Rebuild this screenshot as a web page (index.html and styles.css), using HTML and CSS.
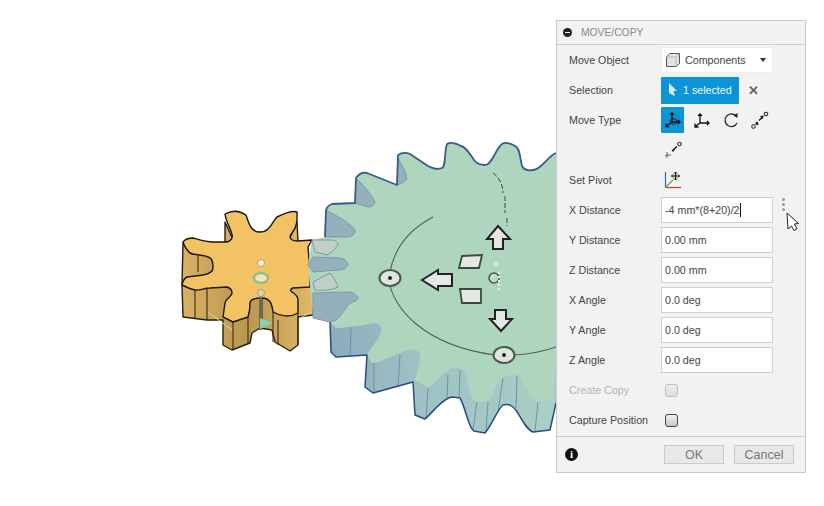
FILE: index.html
```html
<!DOCTYPE html>
<html lang="en">
<head>
    <meta charset="UTF-8">
    <title>Move/Copy</title>
    <link rel="stylesheet" href="styles.css">
</head>
<body>
    <svg class="canvas" width="824" height="506" viewBox="0 0 824 506">
        <defs>
            <linearGradient id="ochre" x1="0" y1="0" x2="1" y2="0">
                <stop offset="0" stop-color="#d8b062"/>
                <stop offset="0.5" stop-color="#b9974f"/>
                <stop offset="1" stop-color="#e0b865"/>
            </linearGradient>
            <linearGradient id="steel" x1="0" y1="0" x2="1" y2="0">
                <stop offset="0" stop-color="#8aa8bb"/>
                <stop offset="0.4" stop-color="#9cc0c4"/>
                <stop offset="1" stop-color="#a9d0c4"/>
            </linearGradient>
        </defs>

        <!-- small gear -->
        <path class="wall-small" d="M183 243 L182 285 L183 317 L207 320 L223 320 L223 345 L232 350 L250 343 L252 333 L260 328 L272 330 L275 342 L290 351 L298 345 L298 317 L313 315 L313 285 L260 285 L215 250 Z"/>
        <path class="wall-small" d="M225 222 L234 242 H225 Z M297 222 L288 242 H298 Z"/>
        <path class="edge" d="M207 289 V320 M195 290 V318 M233 322 V349 M248 317 V343 M273 312 V342 M278 320 V345 M298 313 V345 M198 256 V272 M262 298 V328"/>
        <path class="face-small" d="M225 214 C232 210 240 211 246 215 C249 224 251 232 260 232 C270 232 272 222 277 217 C283 214 292 210 297 212 C297 218 298 226 292 233 C288 238 291 241 298 241 L312 240 L308 247 L310 270 L310 287 L293 288 C290 289 290 291 292 292 C297 295 298 298 298 300 L298 313 C290 318 280 316 273 312 C272 304 270 298 262 298 C254 298 250 300 250 303 C250 310 249 314 248 317 L233 322 L223 317 L225 303 C226 298 232 297 232 293 C232 290 230 288 227 287 L210 288 C204 288 200 291 195 290 C190 289 186 287 182 285 C183 280 185 278 187 277 L203 275 C208 274 213 272 213 268 C213 262 212 259 210 258 C204 254 196 256 190 253 C187 250 184 246 183 242 C186 238 190 238 193 238 C200 240 206 242 213 242 L227 242 C231 241 233 238 232 235 C231 229 226 222 225 214 Z"/>
        <path class="axis" d="M208 312 L232 330 M300 318 L312 312"/>
        <rect class="shaft" x="259" y="296" width="3" height="34"/>
        <circle class="hole" cx="261" cy="263" r="3.5"/>
        <ellipse class="ring" cx="261" cy="278" rx="7" ry="5"/>
        <circle class="hole dim" cx="261" cy="293" r="3.5"/>
        <path class="cone" d="M260 318 L273 323 L260 329 Z"/>

        <!-- big gear -->
        <path class="wall-big" d="M313 293 L313 318 L330 322 L331 352 L336 357 L367 355 L365 387 L373 393 L413 382 L415 415 L425 419 C433 412 443 398 452 397 L460 398 C466 408 468 428 474 431 L485 433 C492 425 497 410 503 405 C510 403 513 407 516 410 C522 420 527 430 533 432 L550 430 L556 403 L556 300 Z"/>
        <path class="edge-blue" d="M351 328 L350 356 M374 363 L374 392 M400 355 L398 386 M428 388 L426 418 M448 375 L447 398 M460 370 L459 398 M477 402 L473 430 M488 402 L486 432 M503 378 L498 412 M517 375 L516 408 M538 402 L535 431"/>
        <path class="face-big" d="M556 153 C548 156 541 170 533 170 C527 171 524 170 522 166 C520 158 520 148 515 146 C510 143 505 142 502 144 C496 148 492 165 485 165 C480 165 477 164 474 160 C470 154 466 147 461 146 C456 143 450 142 447 144 C444 152 446 167 442 168 C436 170 432 168 428 166 L410 154 C405 152 401 153 398 155 L397 185 L367 173 C362 172 358 175 356 178 L355 203 L332 204 C329 205 327 207 326 210 L325 237 L312 240 L308 265 L313 318 L330 322 C334 328 337 328 340 328 L365 325 C372 323 380 322 381 328 C383 336 372 345 367 355 C370 362 372 363 376 363 L405 351 C412 348 418 350 420 353 C421 362 416 375 415 380 L428 388 C437 382 446 368 455 368 C465 367 467 372 468 385 C470 395 474 402 477 402 L488 402 C493 395 498 380 503 377 C510 374 517 374 520 378 C526 387 532 399 538 402 L552 400 C554 390 554 380 556 370 Z"/>
        <path class="lobe light" d="M312 240 L332 240 C336 240 338 243 338 245 C335 250 330 253 327 255 L315 252 Z"/>
        <path class="lobe" d="M308 265 L313 257 L340 258 C345 259 348 262 348 265 C346 269 342 270 338 270 L313 272 Z"/>
        <path class="lobe light" d="M313 282 L330 273 C334 278 337 283 338 287 C332 290 322 291 315 290 Z"/>
        <path class="lobe" d="M313 293 L350 292 C354 293 358 296 358 298 C356 302 352 302 350 303 C345 308 342 316 336 320 L330 322 L313 318 Z"/>
        <path class="lobe" d="M326 210 C335 215 345 220 350 225 C354 228 356 230 355 232 C354 236 350 237 346 237 L325 237 Z"/>
        <path class="lobe" d="M356 178 C362 184 370 192 375 202 C374 206 371 207 368 207 L355 203 Z"/>
        <path class="lobe" d="M398 158 C402 165 406 172 407 179 C405 182 400 184 397 185 Z"/>
        <path class="outline" d="M556 153 C548 156 541 170 533 170 C527 171 524 170 522 166 C520 158 520 148 515 146 C510 143 505 142 502 144 C496 148 492 165 485 165 C480 165 477 164 474 160 C470 154 466 147 461 146 C456 143 450 142 447 144 C444 152 446 167 442 168 C436 170 432 168 428 166 L410 154 C405 152 401 153 398 155 L397 185 L367 173 C362 172 358 175 356 178 L355 203 L332 204 C329 205 327 207 326 210 L325 237"/>
        <path class="outline thin" d="M330 322 L331 352 L336 357 L367 355 L365 387 L373 393 L413 382 L415 415 L425 419 C433 412 443 398 452 397 L460 398 C466 408 468 428 474 431 L485 433 C492 425 497 410 503 405 C510 403 513 407 516 410 C522 420 527 430 533 432 L550 430 L556 403"/>

        <path class="arc" d="M390 272 C395 245 412 228 433 217"/>
        <path class="arc" d="M390 285 C394 305 420 345 495 355 M514 355 C530 354 545 351 556 347"/>
        <path class="dash" d="M493 173 C500 178 503 186 503 193 M505 196 L505 213 M507 218 L507 226"/>
        <circle class="dash-dot" cx="496" cy="264" r="3.5"/>

        <!-- manipulators -->
        <ellipse class="grip" cx="390" cy="278" rx="10.5" ry="8"/>
        <circle class="grip-dot" cx="390" cy="278" r="2"/>
        <ellipse class="grip" cx="504" cy="355" rx="10.5" ry="8"/>
        <circle class="grip-dot" cx="504" cy="355" r="2"/>
        <circle class="grip-small" cx="494" cy="278" r="5"/>
        <path class="grip-line" d="M499 272 V290"/>
        <path class="arrow" d="M422 280 L438 270 L438 274 L452 274 L452 286 L438 286 L438 290 Z"/>
        <path class="arrow" d="M498 226 L510 239 L503 239 L503 249 L493 249 L493 239 L487 239 Z"/>
        <path class="arrow" d="M501 331 L490 319 L495 319 L495 310 L506 310 L506 319 L512 319 Z"/>
        <path class="arrow flat" d="M462 256 L482 255 L479 268 L459 268 Z"/>
        <path class="arrow flat" d="M460 289 L481 289 L481 303 L462 303 Z"/>
    </svg>

    <div class="panel">
        <div class="panel-head">
            <span class="collapse"></span>
            <span>MOVE/COPY</span>
        </div>
        <div class="rows">
            <div class="row">
                <label>Move Object</label>
                <div class="dropdown">
                    <svg width="16" height="16" viewBox="0 0 16 16"><path d="M1.5 5 L5 1.5 H14.5 V11.5 L11 14.5 H1.5 Z" fill="#e3e3e6" stroke="#555"/><path d="M1.5 5 H11 V14.5 M11 5 L14.5 1.5" fill="none" stroke="#bbb"/></svg>
                    <span>Components</span>
                    <i class="caret"></i>
                </div>
            </div>
            <div class="row">
                <label>Selection</label>
                <div class="selected">
                    <svg width="12" height="16" viewBox="0 0 12 16"><path d="M2 1 L10 9 L6.5 9 L8 14 L5.5 13 L2 11 Z" fill="#dfe6ea"/></svg>
                    <span>1 selected</span>
                </div>
                <span class="clear">&#10005;</span>
            </div>
            <div class="row">
                <label>Move Type</label>
                <div class="tools">
                    <span class="tool on">
                        <svg width="16" height="16" viewBox="0 0 16 16"><path d="M7 1 V10 L1.5 14 M7 10 H15 M5.2 2.8 L7 1 L8.8 2.8 M1 11.5 V14.7 H4.2 M13 8 L15 10 L13 12" fill="none" stroke="#111" stroke-width="1.3"/><ellipse cx="8.5" cy="9.5" rx="3.5" ry="2.8" fill="none" stroke="#111" stroke-width="0.9"/></svg>
                    </span>
                    <span class="tool">
                        <svg width="16" height="16" viewBox="0 0 16 16"><path d="M6 2 V11 L1.5 14.5 M6 11 H15 M4 4 L6 2 L8 4 M1 11.5 V15 H4.5 M13 9 L15 11 L13 13" fill="none" stroke="#111" stroke-width="1.3"/></svg>
                    </span>
                    <span class="tool">
                        <svg width="16" height="16" viewBox="0 0 16 16"><path d="M13 4 A6.3 6.3 0 1 0 14 11" fill="none" stroke="#222" stroke-width="1.3"/><path d="M10.5 3.5 L14.5 1 V6 Z" fill="#222"/></svg>
                    </span>
                    <span class="tool">
                        <svg width="18" height="18" viewBox="0 0 18 18"><circle cx="15" cy="3" r="1.8" fill="none" stroke="#111"/><circle cx="2.5" cy="15.5" r="1.8" fill="none" stroke="#111"/><path d="M8 9.5 L11 6.5 M5.5 13 L7 11.5" stroke="#111" stroke-width="1.4"/><path d="M12.5 4.5 L9 5 L12 8 Z M4.5 14 L5 10.5 L8 13.5 Z" fill="#111"/></svg>
                    </span>
                </div>
            </div>
            <div class="row">
                <label></label>
                <span class="tool">
                    <svg width="18" height="18" viewBox="0 0 18 18"><circle cx="15.5" cy="3" r="1.8" fill="none" stroke="#111"/><path d="M8 10 L13 5.5" stroke="#111" stroke-width="1.4"/><path d="M8 9 L11 8 L9 11 Z" fill="#111"/><path d="M3 11 V17" stroke="#3a7f3a"/><path d="M3 14 H7" stroke="#c0392b"/><path d="M1 15 L3 14" stroke="#2b5fa8"/></svg>
                </span>
            </div>
            <div class="row">
                <label>Set Pivot</label>
                <span class="tool">
                    <svg width="18" height="18" viewBox="0 0 18 18"><path d="M1.5 1 V16.5" stroke="#2d62b0" stroke-width="1.2"/><path d="M1.5 16.5 H17" stroke="#c0392b" stroke-width="1.2"/><path d="M1.5 16.5 L9 9" stroke="#4caf50" stroke-width="1.2"/><path d="M11.5 1 V9 M7.5 5 H15.5" stroke="#111" stroke-width="1.2"/><path d="M10 2.5 L11.5 1 L13 2.5 M10 7.5 L11.5 9 L13 7.5 M9 3.5 L7.5 5 L9 6.5 M14 3.5 L15.5 5 L14 6.5" fill="none" stroke="#111"/></svg>
                </span>
            </div>
            <div class="row">
                <label>X Distance</label>
                <div class="field">-4 mm*(8+20)/2<i class="text-caret"></i></div>
                <div class="dots"><i></i><i></i><i></i></div>
            </div>
            <div class="row"><label>Y Distance</label><div class="field">0.00 mm</div></div>
            <div class="row"><label>Z Distance</label><div class="field">0.00 mm</div></div>
            <div class="row"><label>X Angle</label><div class="field">0.0 deg</div></div>
            <div class="row"><label>Y Angle</label><div class="field">0.0 deg</div></div>
            <div class="row"><label>Z Angle</label><div class="field">0.0 deg</div></div>
            <div class="row muted"><label>Create Copy</label><span class="check"></span></div>
            <div class="row"><label>Capture Position</label><span class="check"></span></div>
        </div>
        <div class="panel-foot">
            <span class="info">i</span>
            <div class="buttons">
                <button type="button">OK</button>
                <button type="button">Cancel</button>
            </div>
        </div>
    </div>

    <svg class="pointer" width="14" height="20" viewBox="0 0 14 20"><path d="M1 1 L12.5 11.5 L8.5 12 L11 17 L8 18.5 L5.5 14 L2 17 Z" fill="#fff" stroke="#222"/></svg>
</body>
</html>
```

FILE: styles.css
```css
html, body {
    margin: 0;
    padding: 0;
    height: 506px;
    overflow: hidden;
    background: #fff;
    font-family: "Liberation Sans", Arial, sans-serif;
}

/* 3d viewport */
.canvas {
    position: absolute;
    left: 0;
    top: 0;
}

.wall-small {
    fill: url(#ochre);
    stroke: #2a2010;
    stroke-width: 1.4;
    stroke-linejoin: round;
}

.edge {
    fill: none;
    stroke: #3a2e14;
    stroke-width: 1.1;
}

.face-small {
    fill: #f2c264;
    stroke: #1e1608;
    stroke-width: 1.4;
    stroke-linejoin: round;
}

.axis {
    fill: none;
    stroke: #cfe0a0;
}

.shaft {
    fill: #6d6a52;
}

.hole {
    fill: #fbf3df;
    stroke: #a99f7c;
}

.hole.dim {
    fill: #d8d5c4;
}

.ring {
    fill: #f3e6b4;
    stroke: #8cbf8c;
    stroke-width: 2.4;
}

.cone {
    fill: #8ccdb8;
}

.wall-big {
    fill: url(#steel);
}

.edge-blue {
    fill: none;
    stroke: #6f92ab;
}

.face-big {
    fill: #aed5be;
}

.lobe {
    fill: #8fa9bb;
    fill-opacity: 0.85;
    stroke: #7d98ad;
}

.lobe.light {
    fill: #c6cfc6;
}

.outline {
    fill: none;
    stroke: #3b5c86;
    stroke-width: 1.8;
    stroke-linejoin: round;
}

.outline.thin {
    stroke: #2c4a80;
    stroke-width: 1.5;
}

.arc {
    fill: none;
    stroke: #4d6357;
    stroke-width: 1.1;
}

.dash {
    fill: none;
    stroke: #3c4a42;
    stroke-dasharray: 5 2;
}

.dash-dot {
    fill: #cfe3e0;
    stroke: #a7ccd0;
}

.grip {
    fill: #dfe6e0;
    stroke: #4a5a50;
    stroke-width: 2;
}

.grip-dot {
    fill: #222;
}

.grip-small {
    fill: #c4dcd0;
    stroke: #4a5a50;
    stroke-width: 1.6;
}

.grip-line {
    stroke: #e6efe8;
    stroke-dasharray: 2 2;
    stroke-width: 2;
}

.arrow {
    fill: #e3e8e4;
    stroke: #222;
    stroke-width: 2;
    stroke-linejoin: miter;
}

.arrow.flat {
    stroke: #3c4a42;
    stroke-width: 1.8;
}

/* dialog */
.panel {
    position: absolute;
    left: 556px;
    top: 20px;
    width: 250px;
    height: 453px;
    box-sizing: border-box;
    background: #f2f2f2;
    border: 1px solid #c9c9c9;
    font-size: 10.7px;
    color: #444;
    display: flex;
    flex-direction: column;
}

.panel-head {
    height: 24px;
    box-sizing: border-box;
    border-bottom: 1px solid #d0d0d0;
    display: flex;
    align-items: center;
    gap: 9px;
    padding-left: 6px;
    color: #8a8a8a;
    font-size: 10.3px;
}

.collapse {
    width: 9px;
    height: 9px;
    border-radius: 50%;
    background: #222;
    position: relative;
}

.collapse::after {
    content: "";
    position: absolute;
    left: 2px;
    top: 4px;
    width: 5px;
    height: 1px;
    background: #eee;
}

.row {
    height: 30px;
    display: flex;
    align-items: center;
    padding-left: 12px;
}

.row label {
    width: 92px;
    flex: none;
}

.muted label {
    color: #b5b5b5;
}

.dropdown {
    width: 112px;
    height: 26px;
    box-sizing: border-box;
    background: #fff;
    border: 1px solid #ececec;
    display: flex;
    align-items: center;
    gap: 4px;
    padding-left: 3px;
    position: relative;
}

.caret {
    position: absolute;
    right: 6px;
    top: 10px;
    border-left: 3.5px solid transparent;
    border-right: 3.5px solid transparent;
    border-top: 4px solid #333;
}

.selected {
    width: 78px;
    height: 27px;
    box-sizing: border-box;
    background: #0c95d6;
    color: #eaf5fb;
    display: flex;
    align-items: center;
    gap: 4px;
    padding-left: 6px;
    border-radius: 1px;
}

.clear {
    margin-left: 9px;
    font-size: 13px;
    font-weight: bold;
    color: #666;
}

.tools {
    display: flex;
    gap: 6px;
}

.tool {
    width: 23px;
    height: 26px;
    display: flex;
    align-items: center;
    justify-content: center;
}

.tool.on {
    background: #0c95d6;
    border-radius: 1px;
}

.field {
    width: 112px;
    height: 26px;
    box-sizing: border-box;
    background: #fff;
    border: 1px solid #cfcfcf;
    display: flex;
    align-items: center;
    padding-left: 3px;
    color: #444;
}

.text-caret {
    width: 1px;
    height: 14px;
    background: #111;
}

.dots {
    display: flex;
    flex-direction: column;
    gap: 2px;
    margin: -12px 0 0 9px;
}

.dots i {
    width: 3px;
    height: 3px;
    border-radius: 50%;
    background: #999;
}

.check {
    width: 13px;
    height: 13px;
    margin-left: 4px;
    box-sizing: border-box;
    border: 1px solid #444;
    border-radius: 3px;
    background: linear-gradient(#f0f0f0, #c8c8c8);
}

.muted .check {
    border-color: #c0c0c0;
    background: linear-gradient(#eee, #dcdcdc);
}

.panel-foot {
    flex: 1;
    margin-top: 1px;
    border-top: 1px solid #d0d0d0;
    display: flex;
    align-items: center;
    justify-content: space-between;
    padding: 0 11px 0 8px;
}

.info {
    width: 13px;
    height: 13px;
    border-radius: 50%;
    background: #111;
    color: #fff;
    font: bold 11px/13px "Liberation Serif", serif;
    text-align: center;
}

.buttons {
    display: flex;
    gap: 10px;
}

.buttons button {
    width: 60px;
    height: 19px;
    padding: 0;
    background: #e8e8e8;
    border: 1px solid #cacaca;
    color: #777;
    font: 12.5px "Liberation Sans", Arial, sans-serif;
}

.pointer {
    position: absolute;
    left: 786px;
    top: 212px;
}
```
